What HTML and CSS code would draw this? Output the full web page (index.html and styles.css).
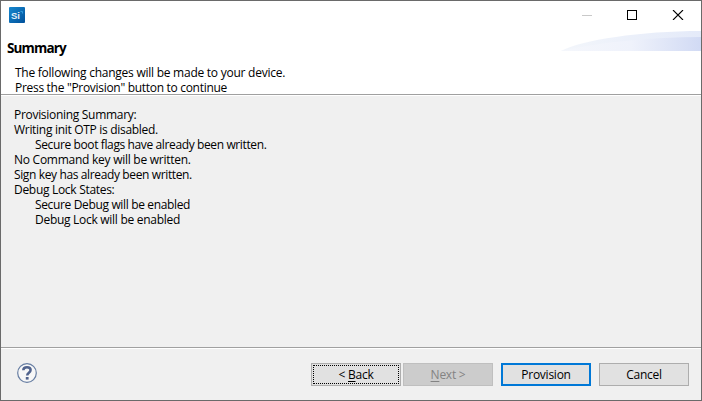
FILE: index.html
```html
<!DOCTYPE html>
<html lang="en">
<head>
<meta charset="utf-8">
<title>Summary</title>
<link rel="stylesheet" href="styles.css">
</head>
<body>
<main class="window">
  <header class="titlebar">
    <svg class="logo" width="16" height="16" viewBox="0 0 16 16">
      <defs><linearGradient id="lg" x1="0" y1="0" x2="1" y2="1"><stop offset="0" stop-color="#1788cf"/><stop offset="1" stop-color="#00509b"/></linearGradient></defs>
      <rect width="16" height="16" rx="1" fill="url(#lg)"/>
      <text x="2" y="12" class="logo-text">Si</text>
      <path d="M11.5 4.5h2v2" fill="none" stroke="#2f9add"/>
    </svg>
    <svg class="controls" width="102" height="10" viewBox="0 0 102 10" fill="none">
      <path d="M0 5.5h10" stroke="#c9c9c9"/>
      <rect x="45.5" y=".5" width="9" height="9" stroke="#000"/>
      <path d="M91 0l10 10M101 0L91 10" stroke="#000" stroke-width="1.1"/>
    </svg>
  </header>
  <section class="banner">
    <svg class="swoosh" width="140" height="20" viewBox="0 0 140 20">
      <defs>
        <linearGradient id="a"><stop offset="0" stop-color="#f3f6fb"/><stop offset="1" stop-color="#e4eaf9"/></linearGradient>
        <linearGradient id="b"><stop offset="0" stop-color="#f5f7fc"/><stop offset=".5" stop-color="#eff2fb"/><stop offset="1" stop-color="#d1daf4"/></linearGradient>
      </defs>
      <path d="M0 20C20 9 80 0 140 0V20Z" fill="url(#a)"/>
      <path d="M0 20C40 11 90 6 140 6V20Z" fill="url(#b)"/>
    </svg>
    <h1>Summary</h1>
    <p><span class="t1">The following changes will be made to your device.</span></p>
    <p><span class="t2">Press the "Provision" button to continue</span></p>
  </section>
  <section class="content">
    <p><span class="c1">Provisioning Summary:</span></p>
    <p><span class="c2">Writing init OTP is disabled.</span></p>
    <p class="indent"><span class="c3">Secure boot flags have already been written.</span></p>
    <p><span class="c4">No Command key will be written.</span></p>
    <p><span class="c5">Sign key has already been written.</span></p>
    <p><span class="c6">Debug Lock States:</span></p>
    <p class="indent"><span class="c7">Secure Debug will be enabled</span></p>
    <p class="indent"><span class="c8">Debug Lock will be enabled</span></p>
  </section>
  <footer class="actions">
    <svg class="help" width="20" height="20" viewBox="0 0 20 20" fill="none">
      <circle cx="10" cy="10" r="9.3" fill="#f7f7f7" stroke="#667da2" stroke-width="1.2"/>
      <path d="M6.3 7.2C6.4 5 7.8 4.2 10 4.2s3.6 1.1 3.6 2.9c0 2.7-3.4 2.6-3.4 5.4" stroke="#51638d" stroke-width="2.5"/>
      <rect x="8.8" y="14" width="2.8" height="2.6" fill="#51638d"/>
    </svg>
    <button class="back"><span>&lt; <u>B</u>ack</span></button>
    <button class="next" disabled><span><u>N</u>ext &gt;</span></button>
    <button class="provision"><span>Provision</span></button>
    <button class="cancel"><span>Cancel</span></button>
  </footer>
</main>
</body>
</html>
```
FILE: styles.css
```css
* { box-sizing: border-box; }
body { margin: 0; font: 12px/15px "Open Sans", "Noto Sans", sans-serif; color: #000; }
.window { width: 702px; height: 401px; border: 1px solid #6a6a6a; background: #f0f0f0; display: flex; flex-direction: column; overflow: hidden; }
.titlebar { height: 29px; flex: none; background: #fff; display: flex; justify-content: space-between; align-items: flex-start; padding: 6px 17px 0 8px; }
.controls { margin-top: 3px; }
.logo-text { font: bold 9.5px "Liberation Sans", sans-serif; fill: #e3f1fa; }
.banner { position: relative; height: 65px; flex: none; background: #fff; border-bottom: 1px solid #a0a0a0; padding: 9px 0 0 14px; }
.swoosh { position: absolute; right: 0; top: 1px; }
h1 { margin: 0 0 8px -8px; font-size: 13.5px; line-height: 18px; font-weight: 700; letter-spacing: -.85px; }
p { margin: 0; height: 15px; white-space: pre; }
.content { flex: 1; border-top: 1px solid #fff; padding: 11px 13px; }
.indent { padding-left: 21px; }
.actions { height: 53px; flex: none; border-top: 1px solid #a0a0a0; box-shadow: inset 0 1px #fff; display: flex; align-items: flex-start; padding: 15px 12px 0 16px; }
.help { margin-right: auto; }
button { width: 90px; height: 23px; padding: 0; border: 1px solid #adadad; background: #e1e1e1; font: inherit; letter-spacing: -.25px; color: #000; }
button u { text-underline-offset: 2px; }
.back { outline: 1px dotted #000; outline-offset: -3px; }
.next { margin-left: 2px; background: #ccc; border-color: #bfbfbf; color: #838383; }
.provision { margin-left: 8px; border: 2px solid #0078d7; }
.cancel { margin-left: 8px; }
.t1 { letter-spacing: -.25px; }
.t2 { letter-spacing: -.3px; }
.c1, .c2, .c6 { letter-spacing: -.3px; }
.c3 { letter-spacing: -.38px; }
.c4 { letter-spacing: -.26px; }
.c5 { letter-spacing: -.37px; }
.c7 { letter-spacing: -.35px; }
.c8 { letter-spacing: -.28px; }
```
